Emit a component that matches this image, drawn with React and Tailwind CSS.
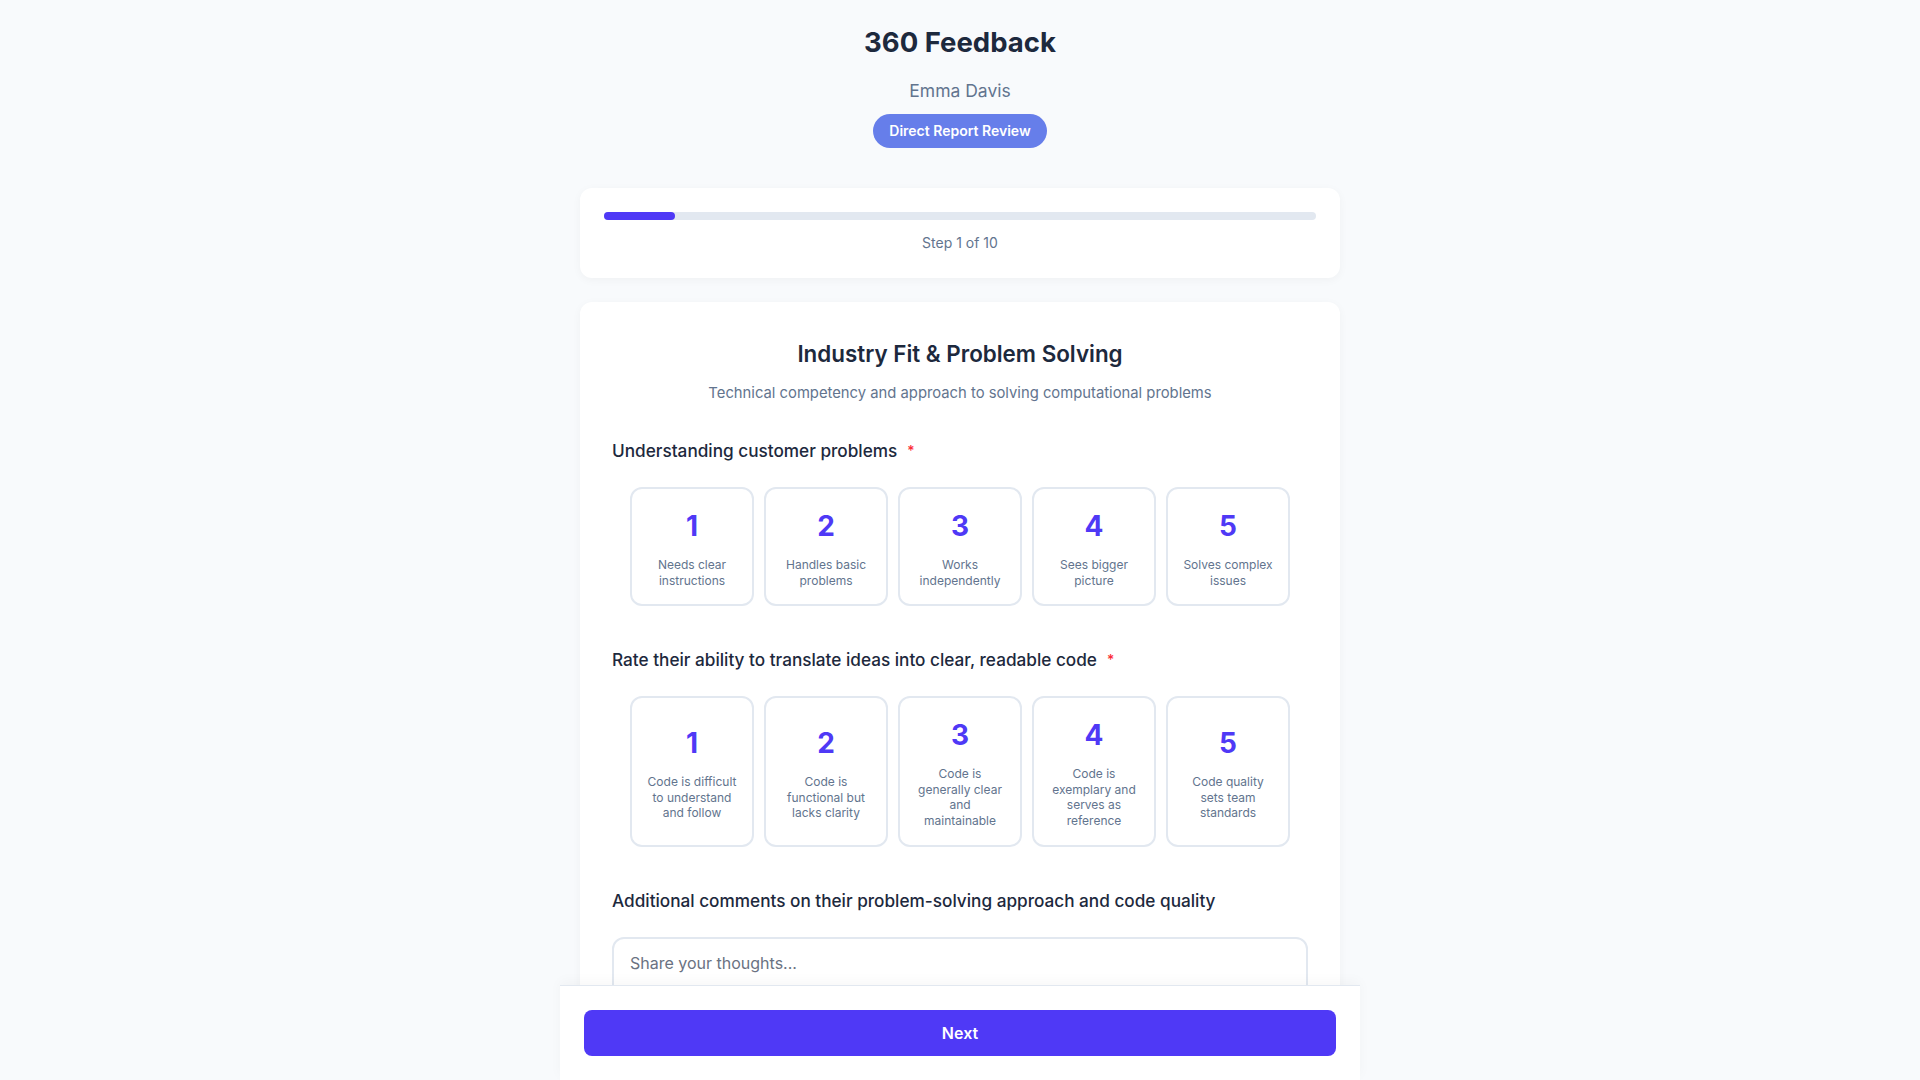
import { useState } from 'react'

const questions = [
  {
    id: 'customer',
    label: 'Understanding customer problems',
    options: [
      'Needs clear instructions',
      'Handles basic problems',
      'Works independently',
      'Sees bigger picture',
      'Solves complex issues',
    ],
  },
  {
    id: 'code',
    label: 'Rate their ability to translate ideas into clear, readable code',
    options: [
      'Code is difficult to understand and follow',
      'Code is functional but lacks clarity',
      'Code is generally clear and maintainable',
      'Code is exemplary and serves as reference',
      'Code quality sets team standards',
    ],
  },
]

function RatingScale({ question, value, onChange }) {
  return (
    <div className="mb-[42px]">
      <div className="flex items-center text-[17.2px] leading-6 font-medium text-slate-800">
        {question.label}
        <span className="ml-2.5 text-sm text-red-500">*</span>
      </div>
      <div className="mt-6 flex justify-center gap-[10px]">
        {question.options.map((opt, i) => (
          <button
            key={opt}
            type="button"
            onClick={() => onChange(i + 1)}
            className={`w-[124px] flex flex-col justify-center items-center rounded-xl border-2 bg-white px-[15px] py-4 text-center ${
              value === i + 1 ? 'border-indigo-600 bg-indigo-50' : 'border-slate-200'
            }`}
          >
            <span className="text-[28px] leading-[42px] font-bold text-indigo-600">{i + 1}</span>
            <span className="mt-2.5 text-xs leading-[15.6px] text-slate-500">{opt}</span>
          </button>
        ))}
      </div>
    </div>
  )
}

export default function App() {
  const [answers, setAnswers] = useState({})
  const [comment, setComment] = useState('')

  return (
    <div className="min-h-screen bg-slate-50 pb-40 font-['Inter',sans-serif]">
      <div className="mx-auto w-[760px]">
        {/* header */}
        <div className="flex flex-col items-center pt-[25px]">
          <h1 className="text-[27.5px] leading-[34px] font-bold text-slate-800">360 Feedback</h1>
          <p className="mt-[18px] text-[17.5px] leading-7 text-slate-500">Emma Davis</p>
          <span className="mt-[9px] flex h-[34px] items-center rounded-full bg-[#667eea] px-4 text-sm font-semibold text-white">
            Direct Report Review
          </span>
        </div>

        {/* progress */}
        <div className="mt-10 rounded-xl bg-white p-6 pb-[25px] shadow-[0_2px_10px_rgba(0,0,0,0.04)]">
          <div className="h-2 w-full rounded-full bg-slate-200">
            <div className="h-2 w-[10%] rounded-full bg-indigo-600" />
          </div>
          <p className="mt-[13px] text-center text-sm leading-5 text-slate-500">Step 1 of 10</p>
        </div>

        {/* section */}
        <div className="mt-6 rounded-xl bg-white px-8 pt-[37px] pb-10 shadow-[0_2px_10px_rgba(0,0,0,0.04)]">
          <h2 className="text-center text-[22.4px] leading-[30px] font-semibold text-slate-800">
            Industry Fit &amp; Problem Solving
          </h2>
          <p className="mt-[13px] text-center text-[14.8px] leading-[22px] text-slate-500">
            Technical competency and approach to solving computational problems
          </p>

          <div className="mt-[35px]">
            {questions.map((q) => (
              <RatingScale
                key={q.id}
                question={q}
                value={answers[q.id]}
                onChange={(v) => setAnswers({ ...answers, [q.id]: v })}
              />
            ))}

            <label htmlFor="comment" className="block text-[17.2px] leading-6 font-medium text-slate-800">
              Additional comments on their problem-solving approach and code quality
            </label>
            <textarea
              id="comment"
              rows={4}
              value={comment}
              onChange={(e) => setComment(e.target.value)}
              placeholder="Share your thoughts..."
              className="mt-6 block w-full resize-none rounded-xl border-2 border-slate-200 px-4 py-3 text-base leading-6 text-slate-800 placeholder:text-gray-500 focus:outline-none"
            />
          </div>
        </div>
      </div>

      {/* footer bar */}
      <div className="fixed bottom-0 left-1/2 w-[800px] -translate-x-1/2 border-t border-slate-200 bg-white p-6 shadow-[0_-4px_12px_rgba(0,0,0,0.03)]">
        <button
          type="button"
          className="h-[46px] w-full rounded-lg bg-indigo-600 text-base font-semibold text-white"
        >
          Next
        </button>
      </div>
    </div>
  )
}
